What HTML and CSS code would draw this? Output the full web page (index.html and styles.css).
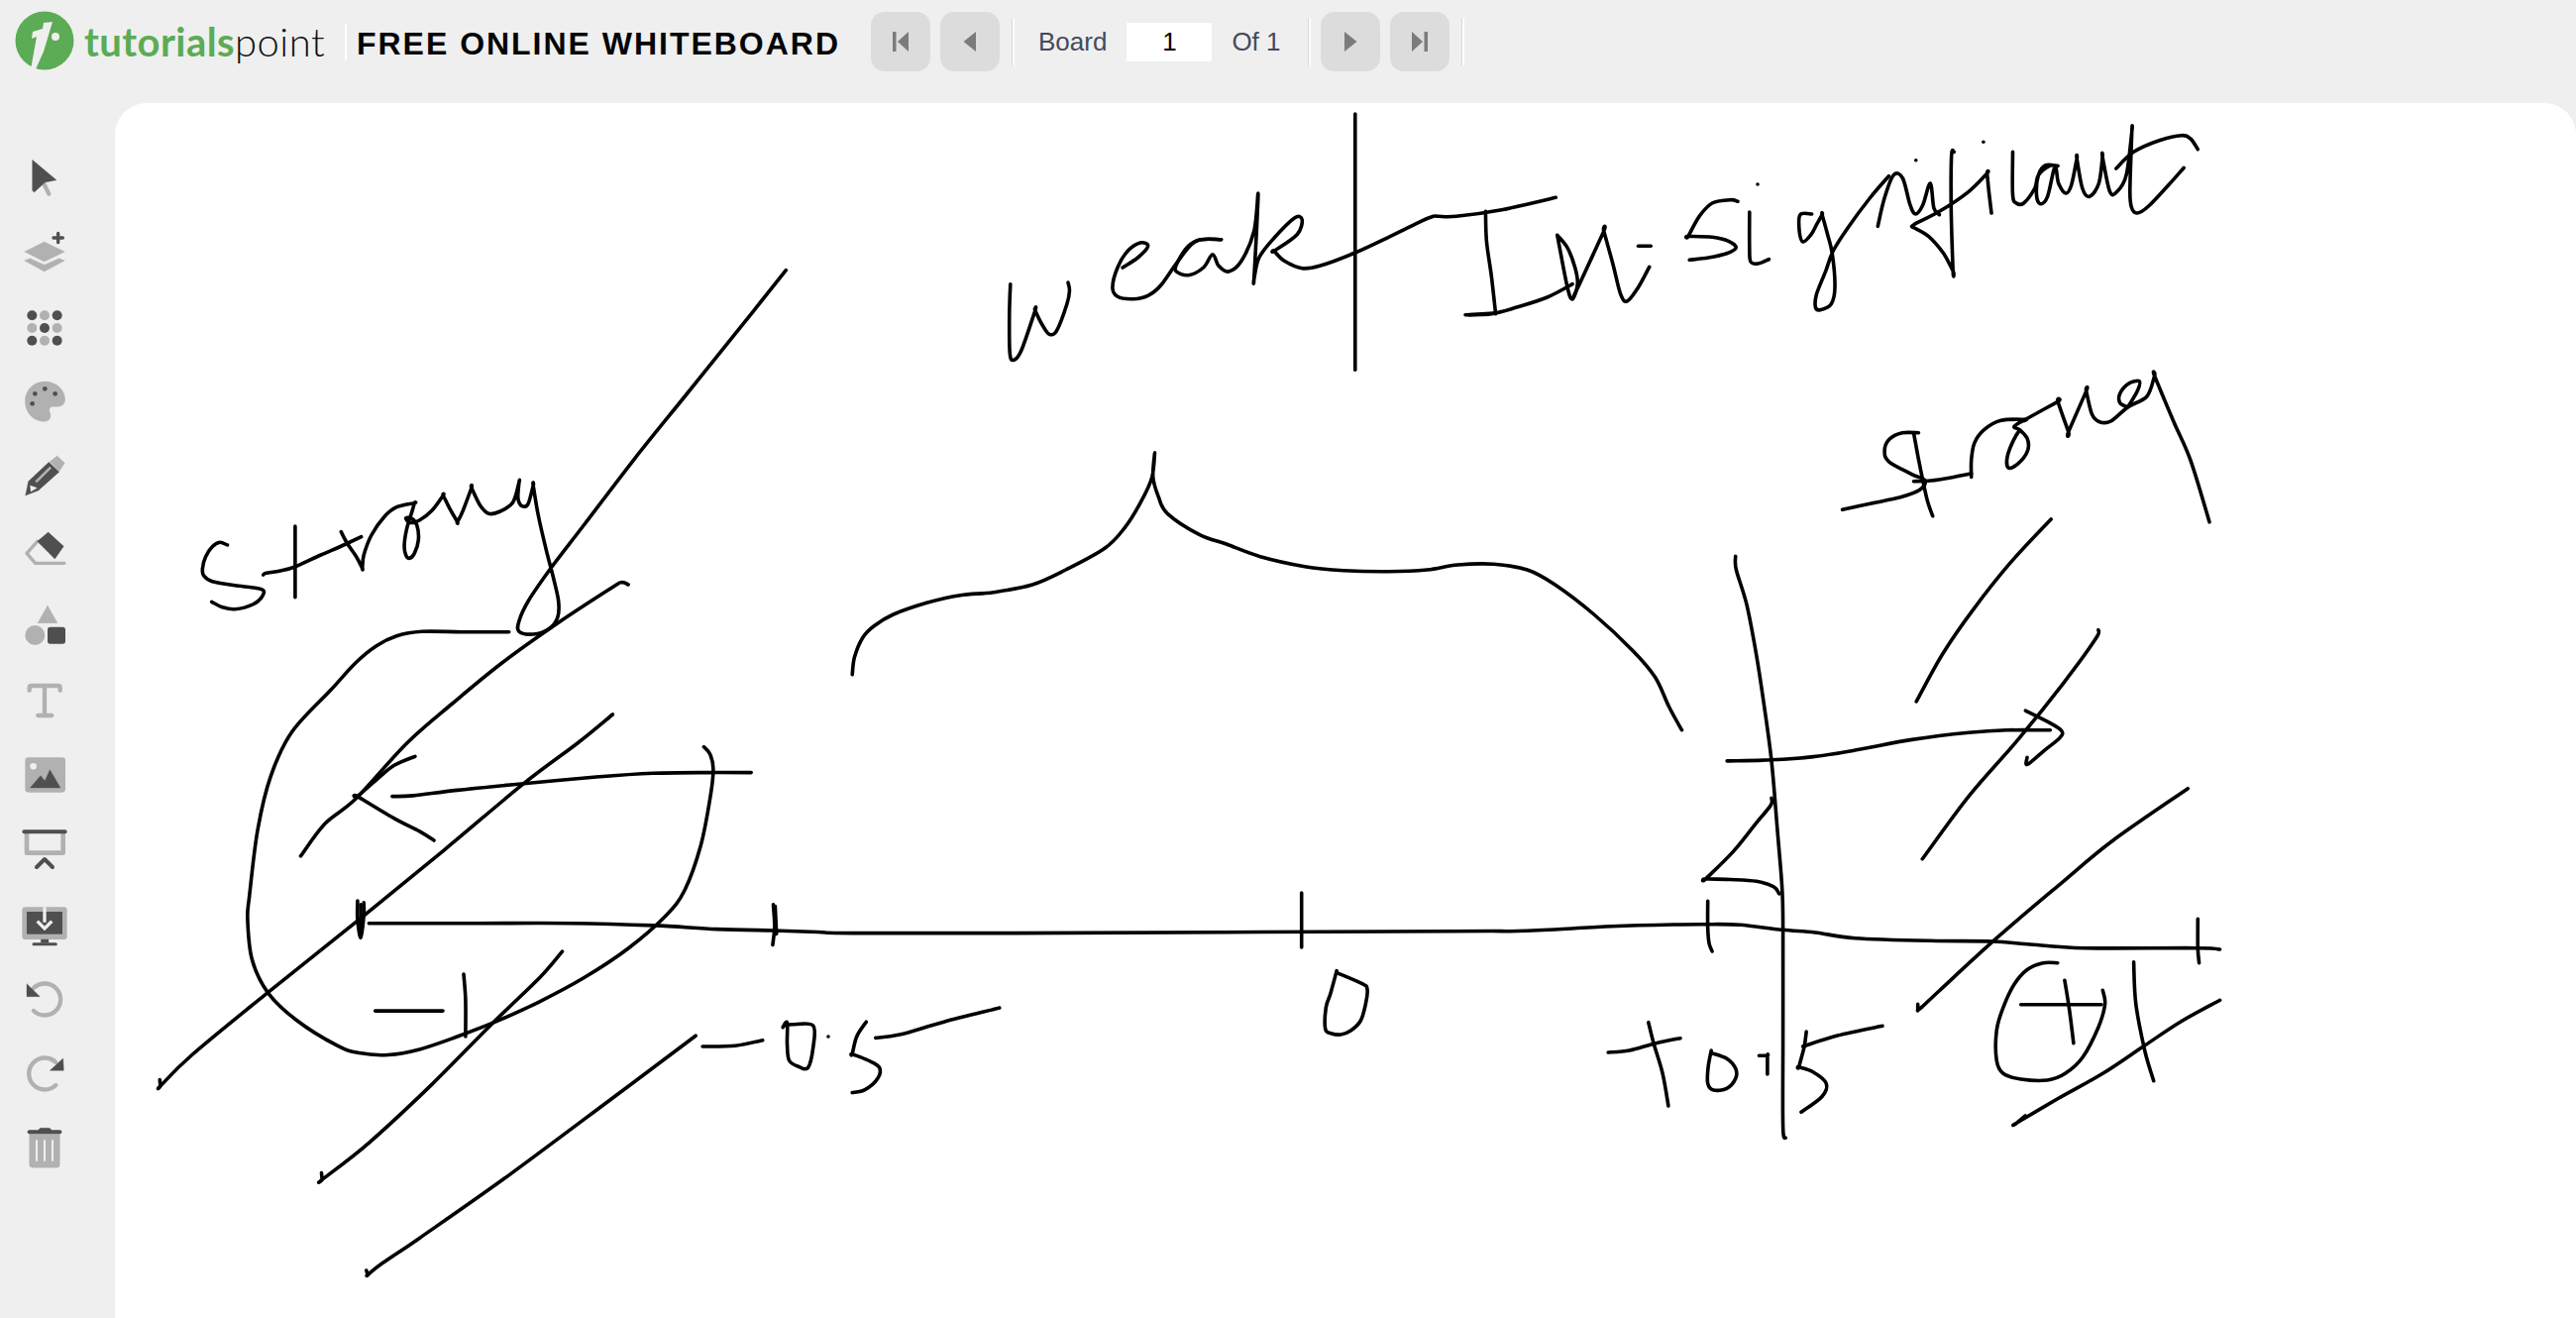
FILE: index.html
```html
<!DOCTYPE html>
<html lang="en">
<head>
<meta charset="utf-8">
<title>Free Online Whiteboard</title>
<link rel="stylesheet" href="styles.css">
</head>
<body>
<header class="topbar">
  <a class="brand">
    <svg class="brand-mark" viewBox="0 0 60 60"><circle class="g" cx="30" cy="29" r="29.5"/><path class="w" d="M18 20 L28 17 L29 11 L38 10 L29 40 L21 58 L16 58 L22 25 L17 27Z"/><circle class="w" cx="41" cy="25" r="4"/></svg>
    <span class="brand-name"><b>tutorials</b><span>point</span></span>
  </a>
  <i class="sep sep-brand"></i>
  <h1 class="title">FREE ONLINE WHITEBOARD</h1>
  <nav class="pager">
    <button class="nav-btn"><svg viewBox="0 0 20 20"><rect x="2" y="0" width="3.5" height="20"/><path d="M18 0 V20 L7 10Z"/></svg></button>
    <button class="nav-btn"><svg viewBox="0 0 20 20"><path d="M16 0 V20 L3.5 10Z"/></svg></button>
    <i class="sep"></i>
    <label class="page-label">Board</label>
    <span class="page-input">1</span>
    <span class="page-label">Of 1</span>
    <i class="sep"></i>
    <button class="nav-btn"><svg viewBox="0 0 20 20"><path d="M4 0 V20 L16.5 10Z"/></svg></button>
    <button class="nav-btn"><svg viewBox="0 0 20 20"><path d="M2 0 V20 L13 10Z"/><rect x="14.5" y="0" width="3.5" height="20"/></svg></button>
    <i class="sep"></i>
  </nav>
</header>
<main class="workspace">
  <aside class="tools">
    <svg class="tool" viewBox="0 0 132 132"><path class="l st" stroke-width="13" d="M62 81 L79 116"/><path class="d" stroke-linejoin="round" d="M29 13 L102 74 L67 81 L35 111 L29 106Z"/></svg>
    <svg class="tool" viewBox="0 0 132 132"><path class="d st" stroke-width="10" d="M107 10 V38 M93 24 H121"/><path class="l" d="M5 66 L65 36 L127 66 L65 96Z"/><path class="l" d="M5 93 L22 86 L65 106 L110 86 L127 93 L65 126Z"/></svg>
    <svg class="tool" viewBox="0 0 132 132"><g class="d"><circle cx="28" cy="31" r="15"/><circle cx="104" cy="31" r="15"/><circle cx="66" cy="69" r="15"/><circle cx="28" cy="107" r="15"/><circle cx="104" cy="107" r="15"/></g><g class="l"><circle cx="66" cy="31" r="15"/><circle cx="28" cy="69" r="15"/><circle cx="104" cy="69" r="15"/><circle cx="66" cy="107" r="15"/></g></svg>
    <svg class="tool" viewBox="0 0 132 132"><path class="l" d="M66 6 C100 6 128 30 128 60 C128 74 118 82 105 82 L92 82 C82 82 78 90 82 100 C88 115 80 127 66 127 C32 127 7 100 7 66 C7 33 32 6 66 6Z"/><g class="d"><circle cx="37" cy="43" r="7"/><circle cx="67" cy="28" r="7"/><circle cx="98" cy="43" r="7"/><circle cx="29" cy="73" r="7"/></g></svg>
    <svg class="tool" viewBox="0 0 132 132"><path class="l" stroke-linejoin="round" d="M82 23 L104 6 L127 28 L110 53Z"/><path class="d" d="M79 25 L110 55 L47 111 L8 126 L17 83Z"/><path class="l st" stroke-width="8" d="M42 83 L82 43"/><path class="b" d="M22 95 L44 103 L24 115Z"/></svg>
    <svg class="tool" viewBox="0 0 132 132"><path class="l st no" stroke-width="10" d="M44 40 L12 76 L38 106 L126 106"/><path class="d" d="M44 40 L77 12 L124 55 L97 93Z"/></svg>
    <svg class="tool" viewBox="0 0 132 132"><path class="l" d="M75 6 L105 59 H45Z"/><circle class="l" cx="37" cy="96" r="30"/><rect class="d" x="75" y="71" width="54" height="51" rx="8"/></svg>
    <svg class="tool" viewBox="0 0 132 132"><path class="l st no" stroke-width="13" d="M20 38 V30 Q20 24 27 24 H107 Q113 24 113 30 V38 M66 24 V112 M46 114 H88"/></svg>
    <svg class="tool" viewBox="0 0 132 132"><rect class="l" x="7" y="16" width="122" height="106" rx="10"/><circle class="b" cx="32" cy="43" r="10"/><path class="d" d="M22 108 L54 71 L67 87 L82 53 L114 108Z"/></svg>
    <svg class="tool" viewBox="0 0 132 132"><path class="l st no" stroke-width="14" d="M12 20 V80 H122 V20"/><path class="d st no" stroke-width="12" d="M4 16 H128 M42 123 L66 99 L90 123"/></svg>
    <svg class="tool" viewBox="0 0 132 132"><rect class="l" x="-2" y="16" width="136" height="98" rx="10"/><rect class="d" x="12" y="30" width="108" height="68"/><path class="d" d="M55 114 H78 V124 H55Z"/><path class="d st" stroke-width="9" d="M33 128 H100"/><path class="bs no" stroke-width="10" d="M66 16 V62 M44 59 L66 81 L88 59"/></svg>
    <svg class="tool" viewBox="0 0 132 132"><path class="l st no" stroke-width="13" d="M33 36 A48 48 0 1 1 33 105"/><path class="d" stroke-linejoin="round" d="M12 23 L52 62 H12Z"/></svg>
    <svg class="tool" viewBox="0 0 132 132"><path class="l st no" stroke-width="13" d="M100 36 A48 48 0 1 0 100 105"/><path class="d" d="M122 24 L82 61 H124Z"/></svg>
    <svg class="tool" viewBox="0 0 132 132"><path class="l" d="M20 28 H112 V120 Q112 130 102 130 H30 Q20 130 20 120Z"/><path class="d st" stroke-width="12" d="M20 22 H112"/><path class="d" d="M47 22 Q47 10 56 10 H78 Q87 10 87 22Z"/><path class="bs" stroke-width="6" d="M42 46 V110 M66 46 V110 M90 46 V110"/></svg>
  </aside>
  <section class="board">
    <svg id="ink" class="ink" viewBox="116 104 2484 1226" preserveAspectRatio="xMinYMin meet"></svg>
  </section>
</main>
<script src="strokes.js"></script>
</body>
</html>
```
FILE: styles.css
```css
* { box-sizing: border-box; }
html, body { margin: 0; height: 100%; }
body {
  background: #efefef;
  font-family: "Liberation Sans", Arial, sans-serif;
  overflow: hidden;
  display: flex;
  flex-direction: column;
  height: 1330px;
}
.topbar {
  height: 104px;
  flex: none;
  display: flex;
  align-items: center;
  padding: 0 0 20px 15px;
}
.brand { display: flex; align-items: center; width: 333px; flex: none; }
.brand-mark { width: 60px; height: 60px; flex: none; overflow: visible; }
.brand-mark .g { fill: #5cab55; }
.brand-mark .w { fill: #efefef; }
.brand-name {
  font-family: Lato, "Liberation Sans", sans-serif;
  font-size: 40px;
  letter-spacing: 0.45px;
  margin-left: 10px;
  line-height: 1;
  color: #111;
  font-weight: 300;
  white-space: nowrap;
}
.brand-name b { color: #5cab55; font-weight: 700; }
.sep {
  display: block;
  flex: none;
  width: 3px;
  height: 48px;
  border-left: 1px solid #d9d9d9;
  border-right: 2px solid #fff;
}
.sep-brand { height: 37px; width: 2px; border-left: 0; margin-right: 10px; }
.title {
  margin: 3px 0 0;
  font-size: 32px;
  line-height: 1;
  font-weight: 700;
  letter-spacing: 1.98px;
  color: #050505;
  white-space: nowrap;
  width: 519px;
  flex: none;
}
.pager { display: flex; align-items: center; }
.nav-btn {
  width: 60px;
  height: 60px;
  border: 0;
  padding: 0;
  border-radius: 14px;
  background: #dcdcdc;
  display: flex;
  align-items: center;
  justify-content: center;
  margin-right: 10px;
}
.nav-btn svg { width: 20px; height: 20px; fill: #7b7b7b; }
.page-label { font-size: 26px; color: #444b5a; }
.pager > .sep { margin: 0 10px 0 2px; }
.pager > .sep + .page-label { margin-left: 14px; }
.page-input {
  width: 86px;
  height: 39px;
  margin: 0 20px;
  background: #fff;
  color: #000;
  font-size: 26px;
  line-height: 39px;
  text-align: center;
}
.page-input + .page-label { margin-right: 25px; }
.workspace { flex: 1; display: flex; min-height: 0; }
.tools {
  width: 116px;
  flex: none;
  display: flex;
  flex-direction: column;
  align-items: flex-start;
  padding: 53px 0 0 22.7px;
  gap: 31.25px;
}
.tool { width: 44px; height: 44px; overflow: visible; flex: none; }
.tool .d { fill: #4f4f4f; stroke: #4f4f4f; }
.tool .l { fill: #b1b1b1; stroke: #b1b1b1; }
.tool .b { fill: #efefef; }
.tool path.d:not(.st), .tool path.l:not(.st) { stroke-width: 1; }
.tool g { stroke: none !important; }
.tool rect, .tool circle { stroke: none !important; }
.tool .no { fill: none; }
.tool .st { stroke-linecap: round; stroke-linejoin: round; }
.tool .bs { stroke: #efefef; fill: none; }
.board {
  flex: 1;
  background: #fff;
  border-radius: 32px 32px 0 0;
  overflow: hidden;
  position: relative;
}
.ink { display: block; width: 2484px; height: 1226px; }
.ink path {
  fill: none;
  stroke: #000;
  stroke-width: 3.6;
  stroke-linecap: round;
  stroke-linejoin: round;
}
```
FILE: strokes.js
```js
var views = {
  a: [130, 240, 1.96, 3],
  b: [130, 750, 1.568, 2.703],
  c: [980, 100, 1.96, 3],
  d: [1680, 110, 2.703, 3],
  e: [1700, 350, 2.613, 2.8],
  f: [1600, 880, 2.24, 3],
  g: [840, 440, 1.782, 3],
  h: [1280, 890, 3, 3]
};

function pts(view, text) {
  var v = views[view];
  return text.trim().split(/\s+/).map(function (p) {
    var xy = p.split(',');
    return [v[0] + xy[0] / v[2], v[1] + xy[1] / v[3]];
  });
}

function smooth(p) {
  var f = function (n) { return n.toFixed(1); };
  var d = 'M' + f(p[0][0]) + ' ' + f(p[0][1]);
  if (p.length === 1) return d + 'L' + f(p[0][0]) + ' ' + f(p[0][1]);
  for (var i = 0; i < p.length - 1; i++) {
    var p0 = p[i - 1] || p[i], p1 = p[i], p2 = p[i + 1], p3 = p[i + 2] || p2;
    d += 'C' + f(p1[0] + (p2[0] - p0[0]) / 6) + ' ' + f(p1[1] + (p2[1] - p0[1]) / 6) + ' ' +
      f(p2[0] - (p3[0] - p1[0]) / 6) + ' ' + f(p2[1] - (p3[1] - p1[1]) / 6) + ' ' +
      f(p2[0]) + ' ' + f(p2[1]);
  }
  return d;
}

var strokes = [
  /* Strong, left */
  [['a', '195,930 180,922 165,935 152,965 146,1000 148,1022 165,1040 210,1052 262,1064 264,1085 245,1110 210,1124 185,1118 164,1102']],
  [['a', '329,873 329,1088']],
  [['a', '266,1020 272,1015 300,1008 330,995 380,960 425,930 460,905']],
  [['a', '420,890 432,925 450,965 462,1000 462,1000 465,960 480,900 505,845 530,815 565,803 565,803 560,830 550,880 545,930 548,960 555,970 565,955 573,915 570,870 560,850 548,848 556,862 575,855 600,825 622,780 622,780 635,820 650,860 650,860 660,830 678,757 678,757 695,810 712,835 735,828 760,800 772,740 772,740 770,790 778,812 790,805 800,750 800,750 810,840 825,940 840,1030 850,1100 848,1150 830,1185 800,1200 772,1192 772,1160 790,1100 835,1000 900,870 1000,670 1100,480 1200,290 1300,98']],
  /* blob */
  [['a', '752,1193 660,1193 580,1192 530,1205 490,1235 450,1285 400,1368'], ['b', '259,-33 225,88 204,236 191,415 188,480 195,590 220,680 265,755 330,825 365,845 410,850 460,835 520,800 580,760 650,705 720,640 790,560 850,470 880,400 905,280 920,150 925,70 920,30 910,10']],
  /* diagonals */
  [['a', '988,1050 975,1043 955,1060 850,1165 740,1285 640,1410'], ['b', '440,0 360,150 310,220 272,308']],
  [['a', '957,1443'], ['b', '710,0 625,110 500,290 365,480 220,680 100,850 50,935 50,935 49,918']],
  [['b', '686,568 650,640 575,765 480,930 380,1090 306,1190 306,1190 305,1172']],
  [['b', '897,798 760,975 600,1180 460,1350 400,1420 378,1450 378,1450 376,1438']],
  /* left arrow */
  [['b', '453,36 420,60 395,95 362,145 362,145 420,205 460,240 483,265']],
  [['b', '417,145 450,143 520,128 625,110 740,92 830,82 920,80 985,80']],
  /* number line */
  [['b', '380,491 550,491 700,491 830,497 930,507 1020,511 1090,515 1145,518 1400,518'], ['f', '-300,179 -170,179 -60,173 60,164 200,159 275,158 350,160 445,175 520,183 610,200 780,208 920,210 1000,218 1130,230 1385,230 1435,234']],
  [['b', '362,430 362,480 367,530 372,470 372,435']],
  [['b', '367,440 367,520']],
  [['b', '1020,440 1022,500 1019,550']],
  [['b', '1023,445 1025,520']],
  [['h', '101,33 101,198']],
  [['f', '277,88 277,170 280,215 287,240']],
  [['f', '1385,142 1385,230 1388,275']],
  /* -1 */
  [['b', '390,730 497,730']],
  [['b', '530,630 533,700 533,800']],
  /* -0.5 */
  [['b', '908,827 960,825 1003,810']],
  [['b', '1035,775 1042,762 1042,820 1045,865 1060,882 1075,885 1083,830 1083,770 1050,767 1040,770']],
  [['b', '1107,800']],
  [['b', '1167,760 1152,800 1145,848 1145,848 1170,865 1188,885 1185,915 1165,945 1145,953']],
  [['b', '1182,804 1220,795 1290,760 1378,722']],
  /* 0 */
  [['h', '206,274 206,274 188,340 175,380 173,445 190,458 220,462 250,450 280,420 295,370 300,325 285,308 206,274']],
  /* brace */
  [['g', '36,722 40,670 55,610 75,575 110,540 170,505 230,482 290,473 360,450 420,405 490,340 525,280 555,200 575,125 580,50 577,125 587,185 603,235 660,298 710,328 770,365 850,395 920,407 1000,410 1070,405 1125,390 1190,388 1250,405 1300,450 1370,540 1440,650 1480,730 1505,820 1528,890']],
  /* weak */
  [['c', '78,560 76,650 77,770 85,790 100,760 127,640 127,640 140,680 155,712 170,700 190,620 195,580 192,555']],
  [['c', '300,510 330,480 350,445 335,435 310,460 290,510 280,570 290,598 320,605 350,595 375,565 410,490 445,430 495,425']],
  [['c', '495,425 455,425 430,445 410,490 405,520 430,533 460,510 478,470 490,505 510,522 535,490 560,400 568,285 565,400 560,545 560,545 570,480 600,420 640,360 655,365 645,410 600,460 600,460 620,490 655,512 690,505 760,465 830,415 890,370 915,355 925,355 960,355 1050,335 1157,298']],
  [['c', '760,45 760,820']],
  /* In- */
  [['c', '1018,340 1020,430 1030,540 1038,650']],
  [['c', '978,653 1030,650 1080,630 1140,600 1190,560']],
  [['c', '985,653 1035,648']],
  [['c', '1160,412 1180,450 1195,510 1200,560 1190,605 1180,570 1160,412']],
  [['c', '1190,605 1210,540 1252,400 1252,400 1270,500 1285,590 1298,612 1320,570 1342,508']],
  [['c', '1320,445 1345,445']],
  /* Significant */
  [['d', '200,280 180,275 130,285 95,325 65,385 65,385 130,388 175,400 195,420 170,437 120,450 68,457']],
  [['d', '232,312 232,420 235,462 255,468 285,455']],
  [['d', '254,228']],
  [['d', '402,318 370,320 368,370 378,402 400,380 415,350 430,320 430,320 445,380 458,440 465,540 455,590 425,608 412,600 415,560 440,490 460,430 500,360 560,270 612,203']],
  [['d', '582,355 600,270 625,200 650,210 670,290 685,318 705,290 725,225 735,300 750,320']],
  [['d', '790,130 783,140 782,300 787,490 787,490 760,435 720,385 678,358 678,358 680,350 750,310 830,250 880,195 880,195 885,250 892,315']],
  [['d', '870,100']],
  [['d', '686,155']],
  [['d', '950,130 950,260 960,285 980,285 1010,240 1020,200 1050,172 1070,172 1070,172 1040,170 1020,200 1015,260 1025,287 1045,265 1065,175 1075,225 1095,255 1110,230 1125,150 1125,150 1140,240 1160,265 1185,225 1195,145 1195,145 1215,250 1235,250 1260,200 1275,70 1275,70 1270,250 1275,300 1290,315 1320,295 1375,230 1417,178']],
  [['d', '1232,180 1280,130 1350,95 1410,80 1435,90 1455,122']],
  /* Strong, right */
  [['e', '618,243 575,243 540,262 528,295 540,325 600,360 635,378 620,405 570,425 490,443 417,460']],
  [['e', '605,243 620,330 640,430 655,478']],
  [['e', '605,380 650,378 710,368 757,358']],
  [['e', '757,368 757,320 765,272 790,235 835,208 900,205 900,205 985,155 985,155 1013,240 1013,240 1060,125 1060,125 1075,190 1095,212 1125,210 1170,170 1220,140 1240,82 1240,82 1290,210 1335,320 1385,495']],
  [['e', '900,205 870,225 885,235 905,260 905,295 880,330 855,342 852,310 870,260 885,235']],
  [['e', '1170,170 1150,160 1148,135 1170,105 1200,97 1195,125 1170,170']],
  [['e', '967,487 860,610 760,745 680,870 612,1002']],
  [['e', '1092,800 1085,825 1000,950 880,1110 750,1270 628,1447']],
  [['e', '135,592 137,630 165,730 190,870 210,1010 230,1170 245,1360 258,1530'], ['f', '447,170 447,500 447,770 453,805']],
  [['e', '113,1170 230,1167 340,1158 450,1140 600,1110 750,1090 850,1083 965,1083']],
  [['e', '900,1028 960,1060 995,1085 990,1105 950,1140 905,1180 904,1160']],
  [['e', '230,1275 228,1295 190,1345 130,1425 57,1503 57,1503 120,1505 190,1510 235,1525 250,1545']],
  [['e', '1328,1248 1130,1395 1000,1510'], ['f', '930,200 800,360 760,410 752,418 752,418 752,400']],
  /* +0.5 */
  [['f', '143,455 155,520 175,610 188,708']],
  [['f', '52,546 100,540 160,518 215,503']],
  [['f', '285,540 278,590 277,640 290,660 320,655 340,625 340,595 320,565 285,548']],
  [['f', '393,556 412,556 412,556 412,612']],
  [['f', '500,483 495,530 483,590 483,590 515,605 545,640 535,680 488,727']],
  [['f', '492,528 570,495 672,466']],
  /* +1 */
  [['f', '1068,275 1035,275 1000,295 970,340 945,410 930,480 930,570 945,610 985,627 1045,630 1085,610 1125,560 1160,470 1175,400 1170,358']],
  [['f', '985,401 1167,401']],
  [['f', '1084,328 1095,420 1104,518']],
  [['f', '1240,272 1245,400 1265,540 1285,632']],
  [['f', '1435,388 1350,450 1265,525 1170,610 1070,685 975,760 975,760 995,738']]
];

var ink = document.getElementById('ink');
strokes.forEach(function (segments) {
  var all = [];
  segments.forEach(function (s) { all = all.concat(pts(s[0], s[1])); });
  var path = document.createElementNS('http://www.w3.org/2000/svg', 'path');
  path.setAttribute('d', smooth(all));
  ink.appendChild(path);
});
```
